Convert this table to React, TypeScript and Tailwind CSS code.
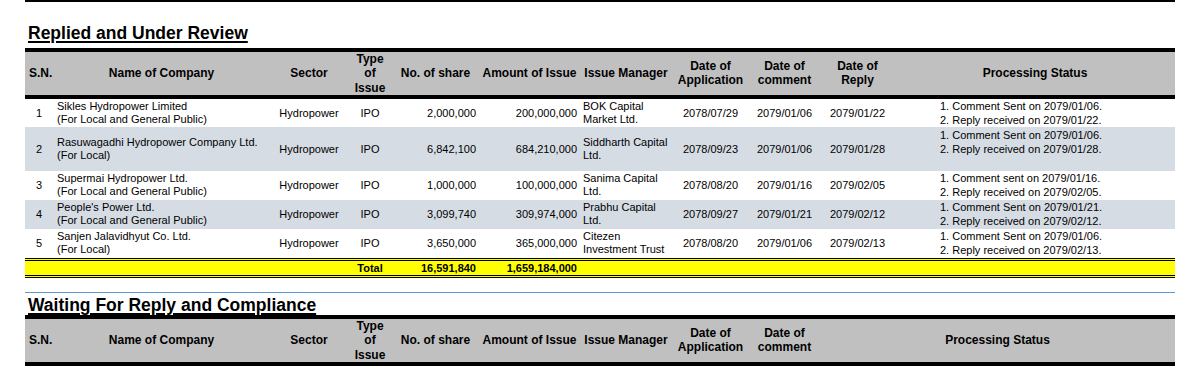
import React from 'react';

interface Issue {
  sn: string;
  company: string[];
  sector: string;
  type: string;
  shares: string;
  amount: string;
  manager: string[];
  applied: string;
  comment: string;
  reply: string;
  status: string[];
  height: string;
  shaded: boolean;
}

const ISSUES: Issue[] = [
  {
    sn: '1',
    company: ['Sikles Hydropower Limited', '(For Local and General Public)'],
    sector: 'Hydropower',
    type: 'IPO',
    shares: '2,000,000',
    amount: '200,000,000',
    manager: ['BOK Capital', 'Market Ltd.'],
    applied: '2078/07/29',
    comment: '2079/01/06',
    reply: '2079/01/22',
    status: ['1. Comment Sent on 2079/01/06.', '2. Reply received on 2079/01/22.'],
    height: 'h-[28px]',
    shaded: false,
  },
  {
    sn: '2',
    company: ['Rasuwagadhi Hydropower Company Ltd.', '(For Local)'],
    sector: 'Hydropower',
    type: 'IPO',
    shares: '6,842,100',
    amount: '684,210,000',
    manager: ['Siddharth Capital', 'Ltd.'],
    applied: '2078/09/23',
    comment: '2079/01/06',
    reply: '2079/01/28',
    status: ['1. Comment Sent on 2079/01/06.', '2. Reply received on 2079/01/28.', '\u00a0'],
    height: 'h-[44px]',
    shaded: true,
  },
  {
    sn: '3',
    company: ['Supermai Hydropower Ltd.', '(For Local and General Public)'],
    sector: 'Hydropower',
    type: 'IPO',
    shares: '1,000,000',
    amount: '100,000,000',
    manager: ['Sanima Capital', 'Ltd.'],
    applied: '2078/08/20',
    comment: '2079/01/16',
    reply: '2079/02/05',
    status: ['1. Comment sent on 2079/01/16.', '2. Reply received on 2079/02/05.'],
    height: 'h-[29px]',
    shaded: false,
  },
  {
    sn: '4',
    company: ["People's Power Ltd.", '(For Local and General Public)'],
    sector: 'Hydropower',
    type: 'IPO',
    shares: '3,099,740',
    amount: '309,974,000',
    manager: ['Prabhu Capital', 'Ltd.'],
    applied: '2078/09/27',
    comment: '2079/01/21',
    reply: '2079/02/12',
    status: ['1. Comment Sent on 2079/01/21.', '2. Reply received on 2079/02/12.'],
    height: 'h-[29px]',
    shaded: true,
  },
  {
    sn: '5',
    company: ['Sanjen Jalavidhyut Co. Ltd.', '(For Local)'],
    sector: 'Hydropower',
    type: 'IPO',
    shares: '3,650,000',
    amount: '365,000,000',
    manager: ['Citezen', 'Investment Trust'],
    applied: '2078/08/20',
    comment: '2079/01/06',
    reply: '2079/02/13',
    status: ['1. Comment Sent on 2079/01/06.', '2. Reply received on 2079/02/13.'],
    height: 'h-[29px]',
    shaded: false,
  },
];

const Lines: React.FC<{ lines: string[] }> = ({ lines }) => (
  <>
    {lines.map((l, i) => (
      <div key={i}>{l}</div>
    ))}
  </>
);

const Cols: React.FC = () => (
  <colgroup>
    <col className="w-[28px]" />
    <col className="w-[217px]" />
    <col className="w-[78px]" />
    <col className="w-[44px]" />
    <col className="w-[87px]" />
    <col className="w-[101px]" />
    <col className="w-[92px]" />
    <col className="w-[77px]" />
    <col className="w-[71px]" />
    <col className="w-[75px]" />
    <col className="w-[280px]" />
  </colgroup>
);

const th = 'border-y-4 border-black bg-[#c0c0c0] p-0 text-[12px] font-bold leading-[14.33px] text-center whitespace-nowrap';

const HeaderRow: React.FC<{ withReply: boolean }> = ({ withReply }) => (
  <tr>
    <th className={`${th} !text-left pl-[4px]`}>S.N.</th>
    <th className={th}>Name of Company</th>
    <th className={th}>Sector</th>
    <th className={th}>
      Type
      <br />
      of
      <br />
      Issue
    </th>
    <th className={th}>No. of share</th>
    <th className={th}>Amount of Issue</th>
    <th className={th}>Issue Manager</th>
    <th className={th}>
      Date of
      <br />
      Application
    </th>
    <th className={th}>
      Date of
      <br />
      comment
    </th>
    {withReply ? (
      <>
        <th className={th}>
          Date of
          <br />
          Reply
        </th>
        <th className={th}>Processing Status</th>
      </>
    ) : (
      <th className={th} colSpan={2}>
        Processing Status
      </th>
    )}
  </tr>
);

const Title: React.FC<{ children: React.ReactNode; className?: string }> = ({ children, className }) => (
  <h2
    className={`ml-[3px] text-[17.5px] font-bold leading-[20px] underline decoration-[2px] underline-offset-[2px] ${className ?? ''}`}
  >
    {children}
  </h2>
);

const App: React.FC = () => {
  const total = 'border-y-[3px] border-double border-black bg-[#ffff00] p-0 text-[11px] font-bold leading-[14px]';

  return (
    <div className="w-[1202px] h-[377px] overflow-hidden bg-white text-black font-['Liberation_Sans',Arial,sans-serif]">
      <div className="ml-[25px] w-[1150px]">
        <div className="h-[2px] bg-black" />

        <Title className="mt-[21px] mb-[5px]">Replied and Under Review</Title>

        <table className="w-full table-fixed border-separate border-spacing-0">
          <Cols />
          <thead>
            <HeaderRow withReply />
          </thead>
          <tbody className="text-[11px]">
            {ISSUES.map((r) => (
              <tr key={r.sn} className={`${r.height} ${r.shaded ? 'bg-[#d6dce4]' : 'bg-white'}`}>
                <td className="p-0 text-center">{r.sn}</td>
                <td className="p-0 pl-[4px] leading-[13px] whitespace-nowrap">
                  <Lines lines={r.company} />
                </td>
                <td className="p-0 text-center">{r.sector}</td>
                <td className="p-0 text-center">{r.type}</td>
                <td className="p-0 pr-[3px] text-right">{r.shares}</td>
                <td className="p-0 pr-[3px] text-right">{r.amount}</td>
                <td className="p-0 pl-[3px] leading-[13px] whitespace-nowrap">
                  <Lines lines={r.manager} />
                </td>
                <td className="p-0 text-center">{r.applied}</td>
                <td className="p-0 text-center">{r.comment}</td>
                <td className="p-0 text-center">{r.reply}</td>
                <td className="p-0 pl-[45px] leading-[14px] whitespace-nowrap">
                  <Lines lines={r.status} />
                </td>
              </tr>
            ))}
            <tr>
              <td className={total} colSpan={3} />
              <td className={`${total} text-center`}>Total</td>
              <td className={`${total} pr-[3px] text-right`}>16,591,840</td>
              <td className={`${total} pr-[3px] text-right`}>1,659,184,000</td>
              <td className={total} colSpan={5} />
            </tr>
          </tbody>
        </table>

        <div className="mt-[14px] h-px bg-[#5b9bd5]" />

        <Title className="mt-[2px]">Waiting For Reply and Compliance</Title>

        <table className="w-full table-fixed border-separate border-spacing-0">
          <Cols />
          <thead>
            <HeaderRow withReply={false} />
          </thead>
        </table>
      </div>
    </div>
  );
};

export default App;
